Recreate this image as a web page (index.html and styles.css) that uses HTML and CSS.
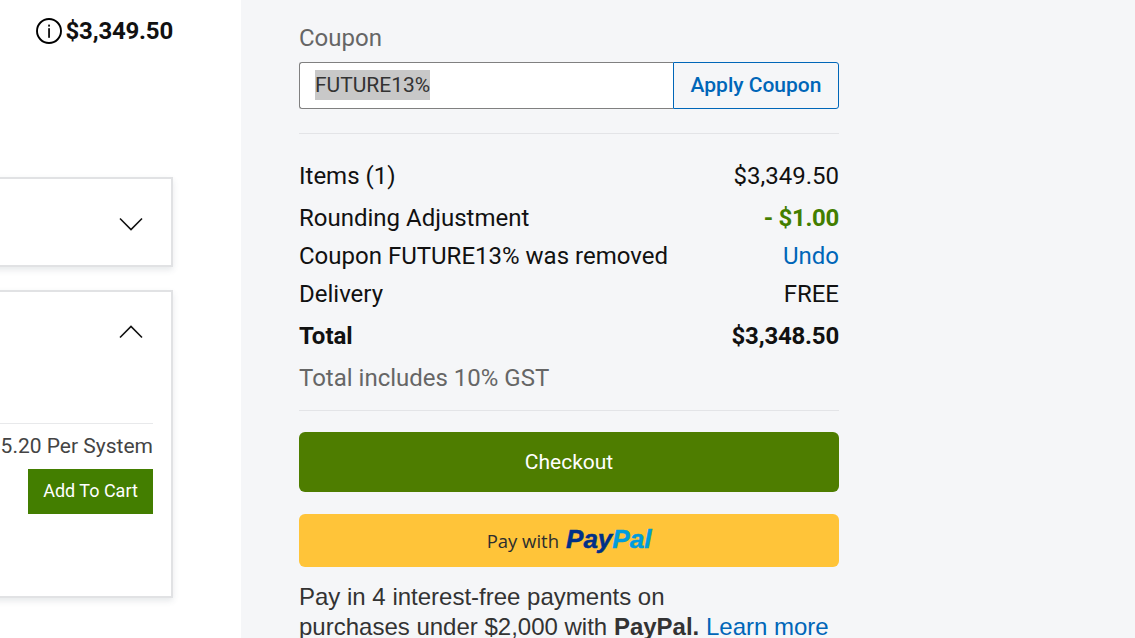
FILE: index.html
```html
<!DOCTYPE html>
<html lang="en">
<head>
  <meta charset="UTF-8">
  <meta name="viewport" content="width=device-width, initial-scale=1.0">
  <title>Cart</title>
  <link rel="stylesheet" href="styles.css">
</head>
<body>
  <div class="page">
    <div class="left">
      <div class="price-row">
        <svg class="info-icon" width="26" height="26" viewBox="0 0 26 26">
          <circle cx="13" cy="13" r="12" fill="none" stroke="#000" stroke-width="1.9"/>
          <rect x="12.2" y="6.6" width="1.7" height="2" fill="#000"/>
          <rect x="12.2" y="10.2" width="1.7" height="9.6" fill="#000"/>
        </svg>
        <span class="price">$3,349.50</span>
      </div>
      <div class="card card-closed">
        <svg class="chevron" width="24" height="14" viewBox="0 0 24 14"><path d="M1 1.5 L12 12.5 L23 1.5" fill="none" stroke="#111" stroke-width="1.6"/></svg>
      </div>
      <div class="card card-open">
        <svg class="chevron" width="24" height="14" viewBox="0 0 24 14"><path d="M1 12.5 L12 1.5 L23 12.5" fill="none" stroke="#111" stroke-width="1.6"/></svg>
        <div class="offer">
          <div class="offer-price"><span>$5.20 Per System</span></div>
          <button class="add-cart">Add To Cart</button>
        </div>
      </div>
    </div>
    <div class="summary">
      <div class="coupon-label">Coupon</div>
      <div class="coupon-row">
        <div class="coupon-input"><span class="selected">FUTURE13%</span></div>
        <button class="coupon-btn">Apply Coupon</button>
      </div>
      <div class="totals">
        <div class="row"><span>Items (1)</span><span>$3,349.50</span></div>
        <div class="row row-round"><span>Rounding Adjustment</span><span class="discount">- $1.00</span></div>
        <div class="row"><span>Coupon FUTURE13% was removed</span><a class="undo">Undo</a></div>
        <div class="row"><span>Delivery</span><span>FREE</span></div>
        <div class="row row-total"><span>Total</span><span class="total-value">$3,348.50</span></div>
        <div class="gst">Total includes 10% GST</div>
      </div>
      <button class="checkout">Checkout</button>
      <button class="paypal"><span class="pay-with">Pay with</span><span class="pp-logo"><span class="pp-dark">Pay</span><span class="pp-light">Pal</span></span></button>
      <p class="pay-later">Pay in 4 interest-free payments on<br>purchases under $2,000 with <b>PayPal.</b> <a class="learn">Learn more</a></p>
    </div>
  </div>
</body>
</html>
```

FILE: styles.css
```css
html, body {
  margin: 0;
  height: 638px;
  overflow: hidden;
  background: #fff;
}
.page {
  display: flex;
  height: 638px;
  font-family: Roboto, sans-serif;
}
.left {
  width: 241px;
  flex: none;
  overflow: hidden;
  padding: 15px 68px 0 0;
  box-sizing: border-box;
}
.price-row {
  display: flex;
  align-items: center;
  justify-content: flex-end;
  gap: 4px;
  height: 32px;
}
.info-icon {
  flex: none;
}
.price {
  font-size: 24px;
  font-weight: 700;
  color: #111;
  letter-spacing: -0.2px;
}
.card {
  position: relative;
  margin-left: -20px;
  background: #fff;
  border: 2px solid #e1e2e4;
  box-shadow: 0 3px 6px rgba(60, 70, 90, 0.12);
  box-sizing: border-box;
}
.card-closed {
  height: 90px;
  margin-top: 130px;
}
.card-open {
  height: 308px;
  margin-top: 23px;
  padding: 131px 18px 0 0;
}
.chevron {
  position: absolute;
  right: 28px;
}
.card-closed .chevron {
  top: 38px;
}
.card-open .chevron {
  top: 33px;
}
.offer {
  border-top: 1px solid #e8e9eb;
  text-align: right;
}
.offer-price {
  display: flex;
  justify-content: flex-end;
  white-space: nowrap;
  font-size: 21px;
  line-height: 44px;
  color: #444;
  height: 45px;
}
.add-cart {
  display: block;
  margin-left: auto;
  width: 125px;
  height: 45px;
  border: none;
  background: #437e00;
  color: #fff;
  font: 18px Roboto, sans-serif;
  padding: 0 0 2px;
}
.summary {
  width: 540px;
  padding: 0 0 0 58px;
  flex: 1;
  background: #f5f6f8;
}
.coupon-label {
  font-size: 24px;
  line-height: 28px;
  margin-top: 24px;
  color: #666;
}
.coupon-row {
  display: flex;
  width: 540px;
  height: 47px;
  margin-top: 10px;
  padding-bottom: 24px;
  border-bottom: 1px solid #e3e4e7;
}
.coupon-input {
  flex: 1;
  background: #fff;
  border: 1px solid #808080;
  border-right: none;
  border-radius: 3px 0 0 3px;
  padding: 7px 0 0 15px;
  font-size: 21px;
  line-height: 30px;
  color: #333;
}
.selected {
  display: inline-block;
  background: #c8c8c8;
}
.coupon-btn {
  width: 166px;
  flex: none;
  background: #f5f6f8;
  border: 1px solid #0066b8;
  border-radius: 0 3px 3px 0;
  color: #0066b8;
  font: 500 21px Roboto, sans-serif;
  padding: 0 0 2px;
}
.totals {
  width: 540px;
  padding-top: 23px;
  padding-bottom: 11px;
  border-bottom: 1px solid #e3e4e7;
}
.row {
  display: flex;
  justify-content: space-between;
  font-size: 24px;
  line-height: 38px;
  color: #111;
}
.row-round {
  margin-top: 4px;
}
.row-total {
  line-height: 42px;
  margin-top: 2px;
  font-weight: 700;
}
.total-value {
  letter-spacing: -0.2px;
}
.discount {
  color: #437e00;
  font-weight: 700;
  letter-spacing: -0.3px;
}
.undo {
  color: #0066b8;
}
.gst {
  font-size: 24px;
  line-height: 42px;
  color: #666;
}
.checkout {
  display: block;
  width: 540px;
  height: 60px;
  margin-top: 21px;
  border: none;
  border-radius: 6px;
  background: #4e7d00;
  color: #fff;
  font: 21px Roboto, sans-serif;
}
.paypal {
  display: flex;
  align-items: center;
  justify-content: center;
  gap: 7px;
  width: 540px;
  height: 53px;
  margin-top: 22px;
  border: none;
  border-radius: 6px;
  background: #ffc439;
  padding: 0;
}
.pay-with {
  font: 500 18.5px "Open Sans", sans-serif;
  color: #2c2e2f;
}
.pp-logo {
  font: italic 700 26px "Liberation Sans", sans-serif;
  line-height: 30px;
  margin-top: -4px;
  -webkit-text-stroke: 0.5px;
}
.pp-dark {
  color: #003087;
}
.pp-light {
  color: #009cde;
}
.pay-later {
  margin: 15px 0 0;
  font: 24px/30px "Liberation Sans", Arial, sans-serif;
  color: #333;
  white-space: nowrap;
}
.learn {
  color: #0066b8;
}
```
